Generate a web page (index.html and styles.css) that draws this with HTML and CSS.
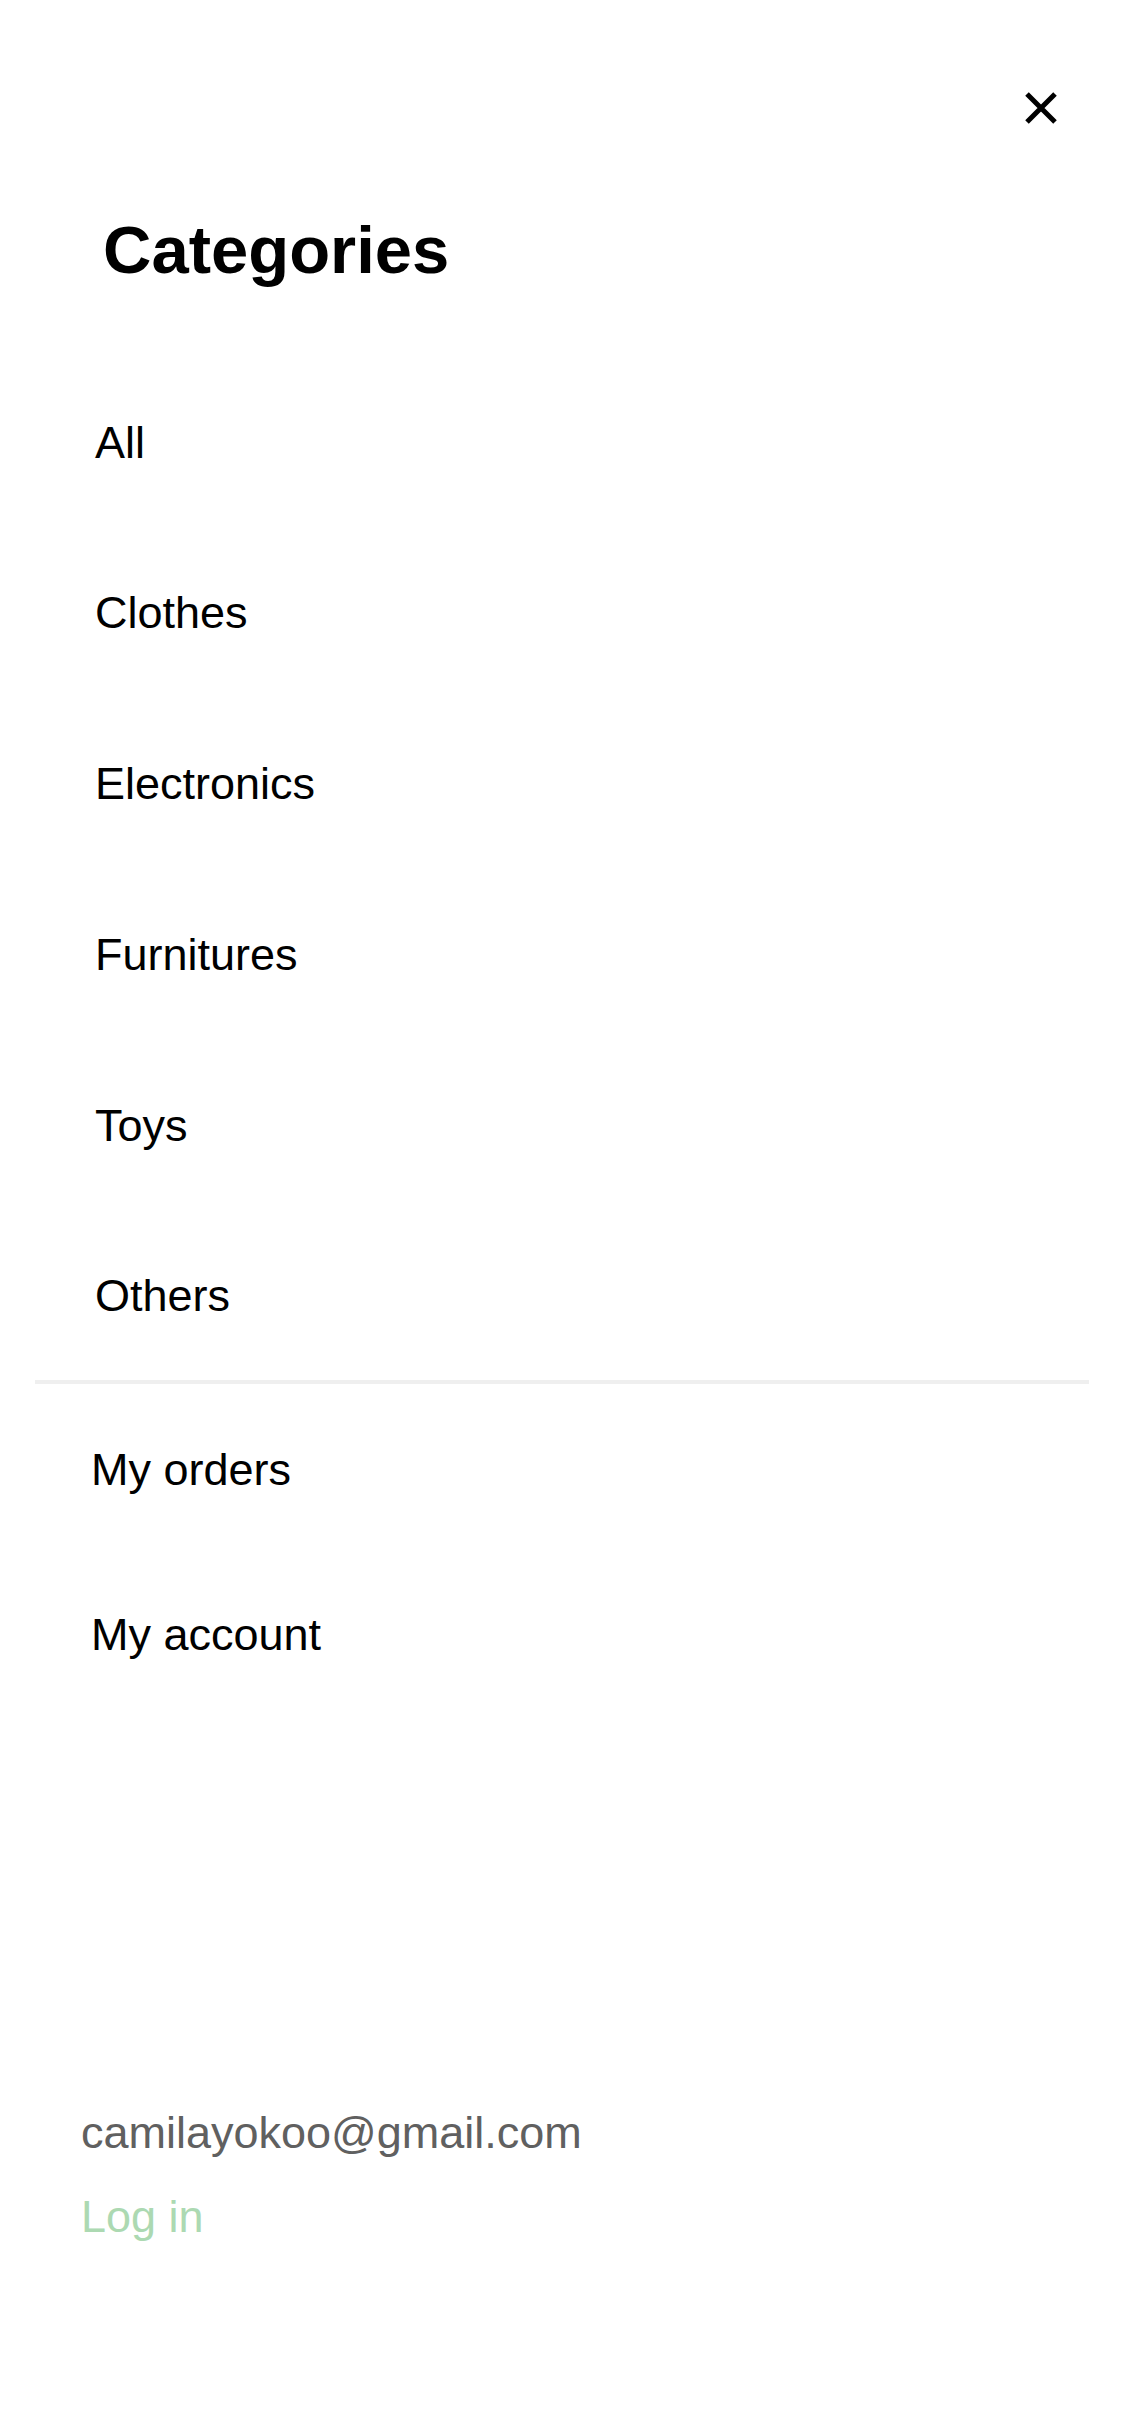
FILE: index.html
```html
<!DOCTYPE html>
<html lang="en">
<head>
<meta charset="utf-8">
<title>Menu</title>
<link rel="stylesheet" href="styles.css">
</head>
<body>
<div class="menu">
  <div class="top">
    <button class="close" aria-label="Close">
      <svg width="32" height="32" viewBox="0 0 32 32"><path d="M2 2 L30 30 M30 2 L2 30" stroke="#000" stroke-width="5" fill="none"/></svg>
    </button>
  </div>
  <h1 class="title">Categories</h1>
  <ul class="cats">
    <li><a href="#">All</a></li>
    <li><a href="#">Clothes</a></li>
    <li><a href="#">Electronics</a></li>
    <li><a href="#">Furnitures</a></li>
    <li><a href="#">Toys</a></li>
    <li><a href="#">Others</a></li>
  </ul>
  <div class="divider"></div>
  <ul class="account">
    <li><a href="#">My orders</a></li>
    <li><a href="#">My account</a></li>
  </ul>
  <div class="footer">
    <p class="email">camilayokoo@gmail.com</p>
    <a class="login" href="#">Log in</a>
  </div>
</div>
</body>
</html>
```
FILE: styles.css
```css
html, body {
  margin: 0;
  padding: 0;
  background: #fff;
}
body {
  font-family: "Liberation Sans", Arial, sans-serif;
  color: #000;
}
.menu {
  display: flex;
  flex-direction: column;
  width: 1128px;
}
.top {
  display: flex;
  justify-content: flex-end;
  padding: 92px 71px 0 0;
}
.close {
  border: 0;
  background: none;
  padding: 0;
  width: 32px;
  height: 32px;
  display: block;
}
.close svg {
  display: block;
}
.title {
  margin: 88px 0 0 103px;
  font-size: 67px;
  line-height: 76px;
  font-weight: 700;
}
.cats, .account {
  list-style: none;
  margin: 0;
  padding: 0;
  display: flex;
  flex-direction: column;
}
.cats {
  margin-top: 129.5px;
  padding-left: 95px;
  gap: 120.8px;
}
.account {
  margin-top: 60.5px;
  padding-left: 91px;
  gap: 115.5px;
}
.cats a, .account a {
  display: block;
  font-size: 45px;
  line-height: 50px;
  color: #000;
  text-decoration: none;
}
.divider {
  margin: 59px 39px 0 35px;
  height: 4px;
  background: #efefef;
}
.footer {
  margin-top: 447.5px;
  padding-left: 81px;
  display: flex;
  flex-direction: column;
  gap: 34px;
}
.email {
  margin: 0;
  font-size: 45px;
  line-height: 50px;
  color: #606060;
}
.login {
  font-size: 45px;
  line-height: 50px;
  color: #acd9b2;
  text-decoration: none;
}
```
